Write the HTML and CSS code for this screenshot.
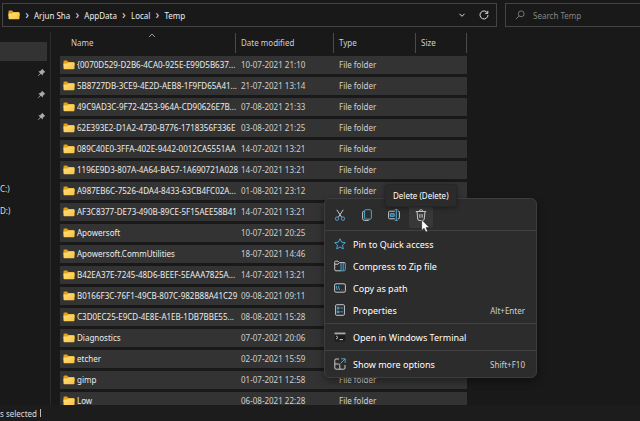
FILE: index.html
```html
<!DOCTYPE html>
<html lang="en">
<head>
  <meta charset="UTF-8">
  <title>Temp</title>
  <link rel="stylesheet" href="styles.css">
</head>
<body>
  <svg class="defs" aria-hidden="true">
    <defs>
      <linearGradient id="folderFill" x1="0" y1="0" x2="1" y2="1">
        <stop offset="0" stop-color="#ffe083"/>
        <stop offset="1" stop-color="#f8c23c"/>
      </linearGradient>
      <symbol id="folder" viewBox="0 0 12 10">
        <path d="M0.5 1.5Q0.5 0.5 1.5 0.5H4L5.5 2H10.5Q11.5 2 11.5 3V6H0.5Z" fill="#e3a012"/>
        <path d="M0.5 3.6H4.2L5.6 2.4H10.6Q11.5 2.4 11.5 3.3V8.3Q11.5 9.3 10.5 9.3H1.5Q0.5 9.3 0.5 8.3Z" fill="url(#folderFill)"/>
      </symbol>
      <symbol id="pin" viewBox="0 0 10 10">
        <path d="M5.6 0.8L9.2 4.4L8 4.9L6.6 6.3L6.2 8.4L4.1 6.4L1.2 9.1L0.8 8.8L3.5 5.8L1.6 3.8L3.7 3.4L5.1 2Z" fill="#a5abb0"/>
      </symbol>
    </defs>
  </svg>

  <div class="explorer">
    <header class="toolbar">
      <nav class="address">
        <svg class="folder" viewBox="0 0 12 10"><use href="#folder"/></svg>
        <span class="sep">›</span>
        <a href="#">Arjun Sha</a>
        <span class="sep">›</span>
        <a href="#">AppData</a>
        <span class="sep">›</span>
        <a href="#">Local</a>
        <span class="sep">›</span>
        <a href="#">Temp</a>
        <button class="history" aria-label="Previous locations">
          <svg width="8" height="8" viewBox="0 0 8 8"><path d="M1.5 2.8L4 5.3L6.5 2.8"/></svg>
        </button>
        <button class="refresh" aria-label="Refresh">
          <svg width="10" height="10" viewBox="0 0 10 10"><path d="M8.6 3.2A4 4 0 1 0 9 5M8.8 0.8V3.4H6.2"/></svg>
        </button>
      </nav>
      <label class="search">
        <svg width="10" height="10" viewBox="0 0 10 10"><circle cx="6.2" cy="3.8" r="2.9"/><path d="M4.1 5.9L0.8 9.2"/></svg>
        <input type="text" placeholder="Search Temp" aria-label="Search Temp">
      </label>
    </header>

    <main class="content">
      <aside class="sidebar">
        <div class="side-item selected"></div>
        <div class="side-item pinned"><svg width="9" height="9"><use href="#pin"/></svg></div>
        <div class="side-item pinned"><svg width="9" height="9"><use href="#pin"/></svg></div>
        <div class="side-item pinned"><svg width="9" height="9"><use href="#pin"/></svg></div>
        <div class="drives">
          <div class="side-item">C:)</div>
          <div class="side-item">D:)</div>
        </div>
      </aside>

      <section class="files">
        <table>
          <thead>
            <tr>
              <th class="name"><svg class="sort" width="8" height="5" viewBox="0 0 8 5"><path d="M1 4L4 1L7 4"/></svg>Name</th>
              <th class="date">Date modified</th>
              <th class="type">Type</th>
              <th class="size">Size</th>
            </tr>
          </thead>
          <tbody>
            <tr><td><svg class="folder"><use href="#folder"/></svg>{0070D529-D2B6-4CA0-925E-E99D5B637...</td><td>10-07-2021 21:10</td><td>File folder</td><td></td></tr>
            <tr><td><svg class="folder"><use href="#folder"/></svg>5B8727DB-3CE9-4E2D-AEB8-1F9FD65A41...</td><td>21-07-2021 13:14</td><td>File folder</td><td></td></tr>
            <tr><td><svg class="folder"><use href="#folder"/></svg>49C9AD3C-9F72-4253-964A-CD90626E7B...</td><td>07-08-2021 21:33</td><td>File folder</td><td></td></tr>
            <tr><td><svg class="folder"><use href="#folder"/></svg>62E393E2-D1A2-4730-B776-1718356F336E</td><td>03-08-2021 21:25</td><td>File folder</td><td></td></tr>
            <tr><td><svg class="folder"><use href="#folder"/></svg>089C40E0-3FFA-402E-9442-0012CA5551AA</td><td>14-07-2021 13:21</td><td>File folder</td><td></td></tr>
            <tr><td><svg class="folder"><use href="#folder"/></svg>1196E9D3-807A-4A64-BA57-1A690721A028</td><td>14-07-2021 13:21</td><td>File folder</td><td></td></tr>
            <tr><td><svg class="folder"><use href="#folder"/></svg>A987EB6C-7526-4DA4-8433-63CB4FC02A...</td><td>01-08-2021 23:12</td><td>File folder</td><td></td></tr>
            <tr><td><svg class="folder"><use href="#folder"/></svg>AF3C8377-DE73-490B-89CE-5F15AEE58B41</td><td>14-07-2021 13:21</td><td>File folder</td><td></td></tr>
            <tr><td><svg class="folder"><use href="#folder"/></svg>Apowersoft</td><td>10-07-2021 20:25</td><td></td><td></td></tr>
            <tr><td><svg class="folder"><use href="#folder"/></svg>Apowersoft.CommUtilities</td><td>18-07-2021 14:46</td><td></td><td></td></tr>
            <tr><td><svg class="folder"><use href="#folder"/></svg>B42EA37E-7245-48D6-BEEF-5EAAA7825A...</td><td>14-07-2021 13:21</td><td></td><td></td></tr>
            <tr><td><svg class="folder"><use href="#folder"/></svg>B0166F3C-76F1-49CB-807C-982B88A41C29</td><td>09-08-2021 09:11</td><td></td><td></td></tr>
            <tr><td><svg class="folder"><use href="#folder"/></svg>C3D0EC25-E9CD-4E8E-A1EB-1DB7BBE55...</td><td>08-08-2021 15:28</td><td></td><td></td></tr>
            <tr><td><svg class="folder"><use href="#folder"/></svg>Diagnostics</td><td>07-07-2021 20:06</td><td></td><td></td></tr>
            <tr><td><svg class="folder"><use href="#folder"/></svg>etcher</td><td>02-07-2021 15:59</td><td></td><td></td></tr>
            <tr><td><svg class="folder"><use href="#folder"/></svg>gimp</td><td>01-07-2021 12:58</td><td>File folder</td><td></td></tr>
            <tr><td><svg class="folder"><use href="#folder"/></svg>Low</td><td>06-08-2021 22:28</td><td>File folder</td><td></td></tr>
          </tbody>
        </table>
      </section>
    </main>

    <footer class="statusbar"><span>s selected</span><span class="bar"></span></footer>
  </div>

  <div class="context-menu" role="menu">
    <div class="actions">
      <button aria-label="Cut">
        <svg viewBox="0 0 12 12"><path class="w" d="M2.8 0.8L7.7 8.2M9.2 0.8L4.3 8.2"/><circle class="b" cx="3" cy="9.6" r="1.7"/><circle class="b" cx="9" cy="9.6" r="1.7"/></svg>
      </button>
      <button aria-label="Copy">
        <svg viewBox="0 0 12 12"><path class="w" d="M3.4 2.4H2.6Q1.6 2.4 1.6 3.4V9.4Q1.6 11.4 3.6 11.4H7.2Q8 11.4 8.2 10.6"/><rect class="b" x="3.6" y="0.7" width="6.8" height="9.4" rx="1.2"/></svg>
      </button>
      <button aria-label="Rename">
        <svg viewBox="0 0 12 12"><path class="w" d="M6.8 2.2H1.6Q0.6 2.2 0.6 3.2V8.8Q0.6 9.8 1.6 9.8H6.8M9.8 2.2H10.4Q11.4 2.2 11.4 3.2V8.8Q11.4 9.8 10.4 9.8H9.8"/><path class="b" d="M2.4 6H6.2M8.3 0.8V11.2M6.8 0.6H9.8M6.8 11.4H9.8"/><path class="b" d="M2.4 4.6H6.2V7.4H2.4Z"/></svg>
      </button>
      <button class="active" aria-label="Delete">
        <svg viewBox="0 0 12 12"><path class="w" d="M0.8 2.5H11.2M4.3 2.3Q4.3 0.7 6 0.7Q7.7 0.7 7.7 2.3M2 2.7L2.8 10.2Q2.9 11.4 4 11.4H8Q9.1 11.4 9.2 10.2L10 2.7M4.9 5V8.8M7.1 5V8.8"/></svg>
      </button>
    </div>
    <hr>
    <button class="item" role="menuitem">
      <svg viewBox="0 0 12 12"><path class="b" d="M6 0.8L7.6 4.2L11.3 4.6L8.5 7.1L9.3 10.9L6 9L2.7 10.9L3.5 7.1L0.7 4.6L4.4 4.2Z"/></svg>
      Pin to Quick access
    </button>
    <button class="item" role="menuitem">
      <svg viewBox="0 0 12 12"><path class="w" d="M7 10.8H2Q0.7 10.8 0.7 9.5V2.2Q0.7 1.2 1.7 1.2H4L5.4 2.6H10.2Q11.3 2.6 11.3 3.7M0.7 4.2H4L5.4 2.8"/><path class="b" d="M7 2.8V10.8H10.1Q11.3 10.8 11.3 9.6V3.8M9.2 2.8V10.6"/></svg>
      Compress to Zip file
    </button>
    <button class="item" role="menuitem">
      <svg viewBox="0 0 12 12"><rect class="w" x="0.6" y="1.8" width="10.8" height="8.4" rx="1.4"/><path class="b" d="M2.3 4L3.2 8M4.4 4L5.6 8M7 8H7.6M8.8 8H9.4"/></svg>
      Copy as path
    </button>
    <button class="item" role="menuitem">
      <svg viewBox="0 0 12 12"><rect class="w" x="1.6" y="0.7" width="8.8" height="10.6" rx="1"/><path class="b" d="M3.3 3.2H5V4.9H3.3ZM3.3 7H5V8.7H3.3ZM6.4 4H8.8M6.4 7.8H8.8"/></svg>
      Properties <kbd>Alt+Enter</kbd>
    </button>
    <hr>
    <button class="item" role="menuitem">
      <svg viewBox="0 0 12 12"><path d="M0.5 1.5H11.5V10.5H0.5Z" fill="#1c1c1c"/><path d="M0.5 1.5H11.5V3.4H0.5Z" fill="#a8a8a8"/><path class="w" d="M2 4.8L4 6.5L2 8.2M5.5 8.6H9"/></svg>
      Open in Windows Terminal
    </button>
    <hr>
    <button class="item" role="menuitem">
      <svg viewBox="0 0 12 12"><path class="w" d="M5 1H2Q0.8 1 0.8 2.2V10Q0.8 11.2 2 11.2H9.8Q11 11.2 11 10V7M0.8 6H4.6Q5.8 6 5.8 7.2V11.2"/><path class="b" d="M7.2 0.8H11.2V4.8M11 1L6.4 5.6"/></svg>
      Show more options <kbd>Shift+F10</kbd>
    </button>
  </div>

  <div class="tooltip" role="tooltip">Delete (Delete)</div>
  <svg class="cursor" width="9" height="14" viewBox="0 0 9 14"><path d="M0.7 0.8V11.4L3.1 9.2L4.8 13L6.6 12.2L5 8.5H8.3Z" fill="#fff" stroke="#111" stroke-width="0.5"/></svg>
</body>
</html>
```
FILE: styles.css
```css
* { box-sizing: border-box; }
body {
  margin: 0;
  background: #191919;
  color: #dedede;
  font-family: "Noto Sans", "Open Sans", sans-serif;
  font-size: 8px;
  overflow: hidden;
}
button, input {
  font: inherit;
  color: inherit;
  background: none;
  border: none;
  padding: 0;
}
svg { flex: none; fill: none; }
.defs { position: absolute; width: 0; height: 0; }
.explorer {
  display: flex;
  flex-direction: column;
  height: 100vh;
}

/* toolbar */
.toolbar {
  display: flex;
  gap: 8px;
  padding: 3px 0 0 2px;
}
.address {
  flex: 0 0 495px;
  height: 24px;
  display: flex;
  align-items: center;
  padding: 0 7px 0 5px;
  border: 1px solid #444;
}
.address a {
  color: #eee;
  text-decoration: none;
}
.sep {
  width: 14px;
  text-align: center;
  font-size: 12px;
  line-height: 14px;
}
.address svg { stroke: #ddd; }
.address svg.folder { stroke: none; }
.history { margin-left: auto; }
.refresh { margin-left: 13px; }
.address button { display: flex; }
.search {
  flex: 1;
  min-width: 0;
  height: 24px;
  display: flex;
  align-items: center;
  gap: 8px;
  padding-left: 9px;
  border: 1px solid #444;
  border-right: none;
}
.search svg { stroke: #757575; }
.search input { width: 100%; outline: none; }
.search input::placeholder { color: #858585; opacity: 1; }
.folder {
  width: 12px;
  height: 10px;
}

/* main area */
.content {
  flex: 1;
  min-height: 0;
  display: flex;
  padding-top: 5px;
}
.sidebar {
  width: 51px;
  padding: 10px 3px 0 0;
  border-right: 1px solid #2b2b2b;
}
.side-item {
  height: 22px;
  display: flex;
  align-items: center;
}
.side-item.selected {
  height: 19px;
  background: #333;
}
.side-item.pinned {
  justify-content: flex-end;
  padding-right: 1px;
}
.drives { margin-top: 50px; }
.files {
  flex: 1;
  min-width: 0;
  overflow: hidden;
  padding-left: 9px;
}
table {
  table-layout: fixed;
  width: 407px;
  border-spacing: 0 3px;
  margin-top: -2px;
}
th, td {
  height: 18px;
  padding: 0 0 0 5px;
  line-height: 16px;
  text-align: left;
  font-weight: normal;
  white-space: nowrap;
}
th {
  height: 20px;
  border-right: 1px solid #4a4a4a;
  color: #cfcfcf;
}
th.name {
  position: relative;
  width: 176px;
  padding-left: 11px;
}
th.date { width: 98px; }
th.type { width: 82px; }
.sort {
  position: absolute;
  top: 0;
  left: 50%;
  stroke: #999;
}
td { background: #333; color: #d0d0d0; }
td:first-child { padding-left: 3px; color: #ececec; }
td .folder {
  margin-right: 2px;
  vertical-align: -2px;
}
.statusbar {
  height: 16px;
  display: flex;
  align-items: center;
  gap: 3px;
  background: #1c1c1c;
}
.statusbar .bar {
  width: 1px;
  height: 8px;
  background: #bbb;
}

/* context menu */
.context-menu {
  position: absolute;
  left: 324px;
  top: 198px;
  width: 213px;
  padding: 3px 0 2px;
  background: #2c2c2c;
  border: 1px solid #3d3d3d;
  border-radius: 6px;
  box-shadow: 0 3px 8px rgba(0,0,0,0.4);
  color: #fff;
  font-size: 9px;
}
.context-menu svg { width: 12px; height: 12px; }
.context-menu .w { stroke: #c8c8c8; }
.context-menu .b { stroke: #4aa5d2; }
.actions {
  display: flex;
  gap: 3px;
  padding: 0 3px;
}
.actions button {
  width: 24px;
  height: 26px;
  display: flex;
  align-items: center;
  justify-content: center;
  border-radius: 3px;
}
.actions .active { background: #383838; }
.context-menu hr {
  height: 1px;
  margin: 2px 0;
  border: none;
  background: #414141;
}
.item {
  display: flex;
  align-items: center;
  gap: 7px;
  width: 100%;
  height: 22px;
  padding: 0 11px 0 9px;
}
kbd {
  margin-left: auto;
  font-family: inherit;
  font-size: 8px;
  color: #d0d0d0;
}
.tooltip {
  position: absolute;
  left: 385px;
  top: 184px;
  padding: 3px 7px;
  line-height: 15px;
  background: #2b2b2b;
  border: 1px solid #262626;
  border-radius: 3px;
  box-shadow: 0 1px 4px rgba(0,0,0,0.4);
  color: #fff;
}
.cursor {
  position: absolute;
  left: 421px;
  top: 219px;
}
```
